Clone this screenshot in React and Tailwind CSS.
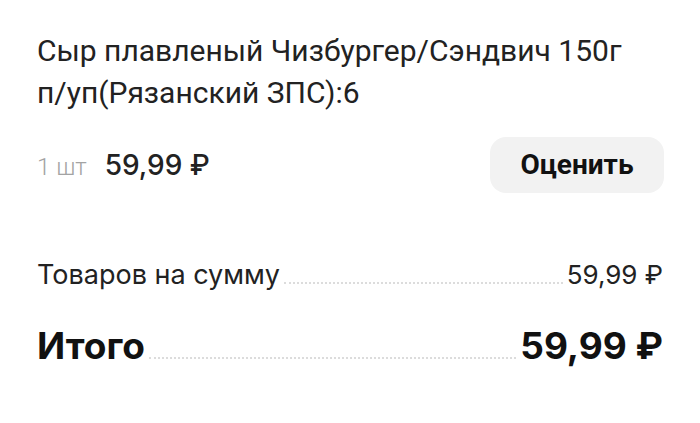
const Leader = () => (
  <div className="flex-1 mx-1 mb-[6px] border-b-2 border-dotted border-[#dcdcdc]" />
);

const App = () => {
  return (
    <div className="w-[700px] h-[423px] bg-white text-[#1c1c1c] px-[37px] pt-[30px]" style={{ fontFamily: 'Roboto, sans-serif' }}>
      {/* Title */}
      <p className="text-[30px] leading-[42px] text-[#222]">
        Сыр плавленый Чизбургер/Сэндвич 150г
        <br />
        п/уп(Рязанский ЗПС):6
      </p>

      {/* Price row */}
      <div className="flex items-center justify-between mt-[23px]">
        <div className="flex items-baseline gap-[18px]">
          <span className="text-[24px] font-light text-[#a3a3a3]">1 шт</span>
          <span className="text-[28px] font-medium text-[#222]" style={{ fontFamily: 'Inter, sans-serif' }}>59,99 ₽</span>
        </div>
        <button className="w-[174px] h-[56px] rounded-[16px] bg-[#f2f2f2] text-[28px] font-bold text-[#111] -mr-[1px]">
          Оценить
        </button>
      </div>

      {/* Summary */}
      <div className="mt-[67px] flex flex-col gap-[37px]">
        <div className="flex items-end">
          <span className="text-[27px] leading-[30px] text-[#222]" style={{ fontFamily: 'Inter, sans-serif' }}>Товаров на сумму</span>
          <Leader />
          <span className="text-[26px] leading-[30px] text-[#222]" style={{ fontFamily: 'Inter, sans-serif' }}>59,99 ₽</span>
        </div>
        <div className="flex items-end">
          <span className="text-[37px] leading-[38px] font-bold text-[#111]" style={{ fontFamily: 'Inter, sans-serif' }}>Итого</span>
          <Leader />
          <span className="text-[37px] leading-[38px] font-bold text-[#111]" style={{ fontFamily: 'Inter, sans-serif' }}>59,99 ₽</span>
        </div>
      </div>
    </div>
  );
};

export default App;
